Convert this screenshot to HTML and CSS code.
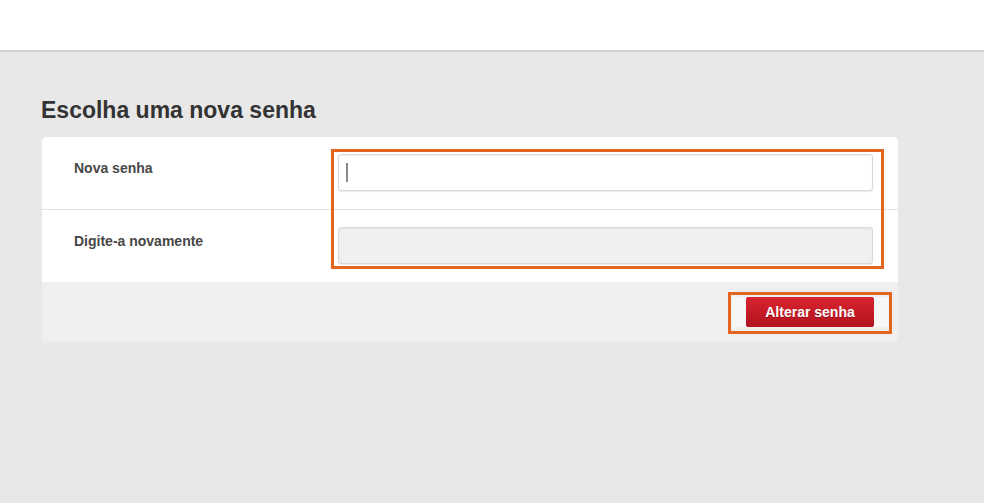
FILE: index.html
```html
<!DOCTYPE html>
<html lang="pt-BR">
<head>
<meta charset="utf-8">
<title>Escolha uma nova senha</title>
<link rel="stylesheet" href="styles.css">
</head>
<body>
<header class="topbar"></header>
<main class="page">
  <h1 class="title">Escolha uma nova senha</h1>
  <section class="card">
    <div class="row">
      <label class="label" for="pw1">Nova senha</label>
      <div class="field">
        <input id="pw1" class="input" type="password">
        <span class="caret"></span>
      </div>
    </div>
    <div class="row row-last">
      <label class="label" for="pw2">Digite-a novamente</label>
      <div class="field">
        <input id="pw2" class="input input-disabled" type="password" disabled>
      </div>
    </div>
    <div class="footer">
      <button class="btn" type="button">Alterar senha</button>
    </div>
  </section>
  <div class="mark mark-fields"></div>
  <div class="mark mark-button"></div>
</main>
</body>
</html>
```
FILE: styles.css
```css
* { box-sizing: border-box; }
html, body { margin: 0; padding: 0; }
body {
  background: #e8e8e8;
  font-family: "Liberation Sans", Arial, sans-serif;
  width: 984px;
  height: 503px;
  overflow: hidden;
}
.topbar {
  height: 52px;
  background: #ffffff;
  border-bottom: 2px solid #cfcfcf;
}
.page {
  position: relative;
  padding: 45px 0 0 42px;
}
.title {
  margin: 0 0 14px -1px;
  font-size: 23px;
  line-height: 26px;
  font-weight: bold;
  color: #333333;
}
.card {
  width: 856px;
  background: #efefef;
  border-radius: 5px;
  overflow: hidden;
}
.row {
  display: flex;
  height: 73px;
  background: #ffffff;
  border-bottom: 1px solid #e4e4e4;
}
.row-last {
  height: 72px;
  border-bottom: none;
}
.label {
  width: 296px;
  padding: 23px 0 0 32px;
  font-size: 14px;
  line-height: 16px;
  font-weight: bold;
  color: #474747;
}
.field {
  position: relative;
  padding-top: 17px;
}
.input {
  display: block;
  width: 535px;
  height: 37px;
  border: 1px solid #d9d9d9;
  border-radius: 3px;
  background: #ffffff;
  box-shadow: inset 0 1px 2px rgba(0,0,0,0.06), 0 1px 1px rgba(0,0,0,0.08);
  outline: none;
  margin: 0;
}
.input-disabled {
  background: #f0f0f0;
}
.caret {
  position: absolute;
  left: 8px;
  top: 26px;
  width: 2px;
  height: 19px;
  background: #8a8a8a;
}
.footer {
  height: 60px;
  display: flex;
  align-items: center;
  justify-content: flex-end;
  padding-right: 24px;
}
.btn {
  width: 128px;
  height: 30px;
  border: none;
  border-radius: 2px;
  background: linear-gradient(#d8242e, #b3121f);
  color: #ffffff;
  font-family: "Liberation Sans", Arial, sans-serif;
  font-size: 14px;
  font-weight: bold;
  text-shadow: 0 1px 0 rgba(0,0,0,0.25);
  box-shadow: -14px 0 0 #f6f6f6, 14px 0 0 #f6f6f6;
  padding: 0;
}
.mark {
  position: absolute;
  border: 3px solid #e2661f;
}
.mark-fields {
  left: 331px;
  top: 97px;
  width: 553px;
  height: 120px;
}
.mark-button {
  left: 728px;
  top: 240px;
  width: 164px;
  height: 42px;
}
```
